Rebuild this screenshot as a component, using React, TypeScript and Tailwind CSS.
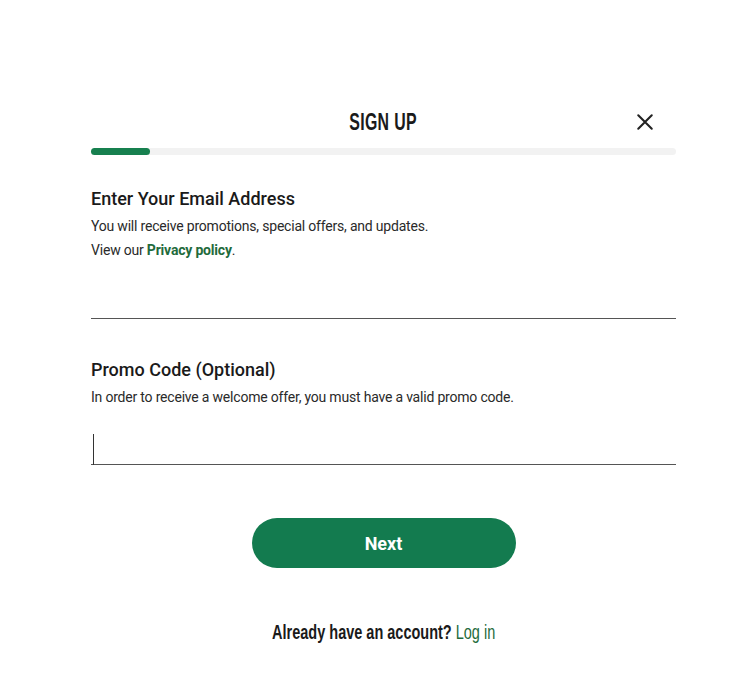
export default function App() {
  const condensed = '"Liberation Sans", Arial, sans-serif';
  return (
    <main className="min-h-[684px] w-[740px] bg-white text-[#1f1f1f]" style={{ fontFamily: 'Roboto, "Liberation Sans", sans-serif' }}>
      <div className="ml-[91px] w-[585px] pt-[102px]">
        {/* header */}
        <div className="relative flex h-[40px] items-center justify-center">
          <h1
            className="text-[23px] font-bold tracking-[0.5px] text-[#1a1a1a] [transform:scaleX(0.69)]"
            style={{ fontFamily: condensed }}
          >
            SIGN UP
          </h1>
          <button className="absolute right-[22px] top-[11px] text-[#222]" aria-label="Close">
            <svg width="18" height="18" viewBox="0 0 20 20" fill="none" stroke="currentColor" strokeWidth="2.3" strokeLinecap="round">
              <path d="M2.5 2.5 L17.5 17.5 M17.5 2.5 L2.5 17.5" />
            </svg>
          </button>
        </div>

        {/* progress */}
        <div className="mt-[6px] h-[7px] w-full rounded-full bg-[#f2f2f2]">
          <div className="h-full w-[59px] rounded-full bg-[#17804f]" />
        </div>

        {/* email */}
        <section className="mt-[32px]">
          <h2 className="text-[18px] font-medium leading-[24px] text-[#1a1a1a]">Enter Your Email Address</h2>
          <p className="mt-[3px] text-[14px] leading-[24px] tracking-[-0.2px] text-[#2a2a2a]">
            You will receive promotions, special offers, and updates.
          </p>
          <p className="text-[14px] leading-[24px] tracking-[-0.2px] text-[#2a2a2a]">
            View our <a className="font-bold text-[#1f6b3c]">Privacy policy</a>.
          </p>
          <input
            type="email"
            className="mt-[21px] block h-[36px] w-full border-b-[1.5px] border-[#555] bg-transparent text-[16px] outline-none"
          />
        </section>

        {/* promo */}
        <section className="mt-[39px]">
          <h2 className="text-[18px] font-medium leading-[24px] text-[#1a1a1a]">Promo Code (Optional)</h2>
          <p className="mt-[3px] text-[14px] leading-[24px] tracking-[-0.2px] text-[#2a2a2a]">
            In order to receive a welcome offer, you must have a valid promo code.
          </p>
          <div className="relative mt-[20px] h-[36px] w-full border-b-[1.5px] border-[#555]">
            <span className="absolute left-[2px] top-[5px] h-[31px] w-[1px] bg-[#333]" />
          </div>
        </section>

        {/* next */}
        <div className="mt-[53px] flex justify-center">
          <button className="h-[50px] w-[264px] rounded-full bg-[#137b4f] text-[18px] font-bold text-white">
            Next
          </button>
        </div>

        <div className="mt-[48px] flex justify-center">
          <p
            className="inline-block whitespace-nowrap text-[21px] font-bold text-[#1a1a1a] [transform:scaleX(0.69)]"
            style={{ fontFamily: condensed }}
          >
            Already have an account? <a className="font-normal text-[#1f6b3c]">Log in</a>
          </p>
        </div>
      </div>
    </main>
  );
}
